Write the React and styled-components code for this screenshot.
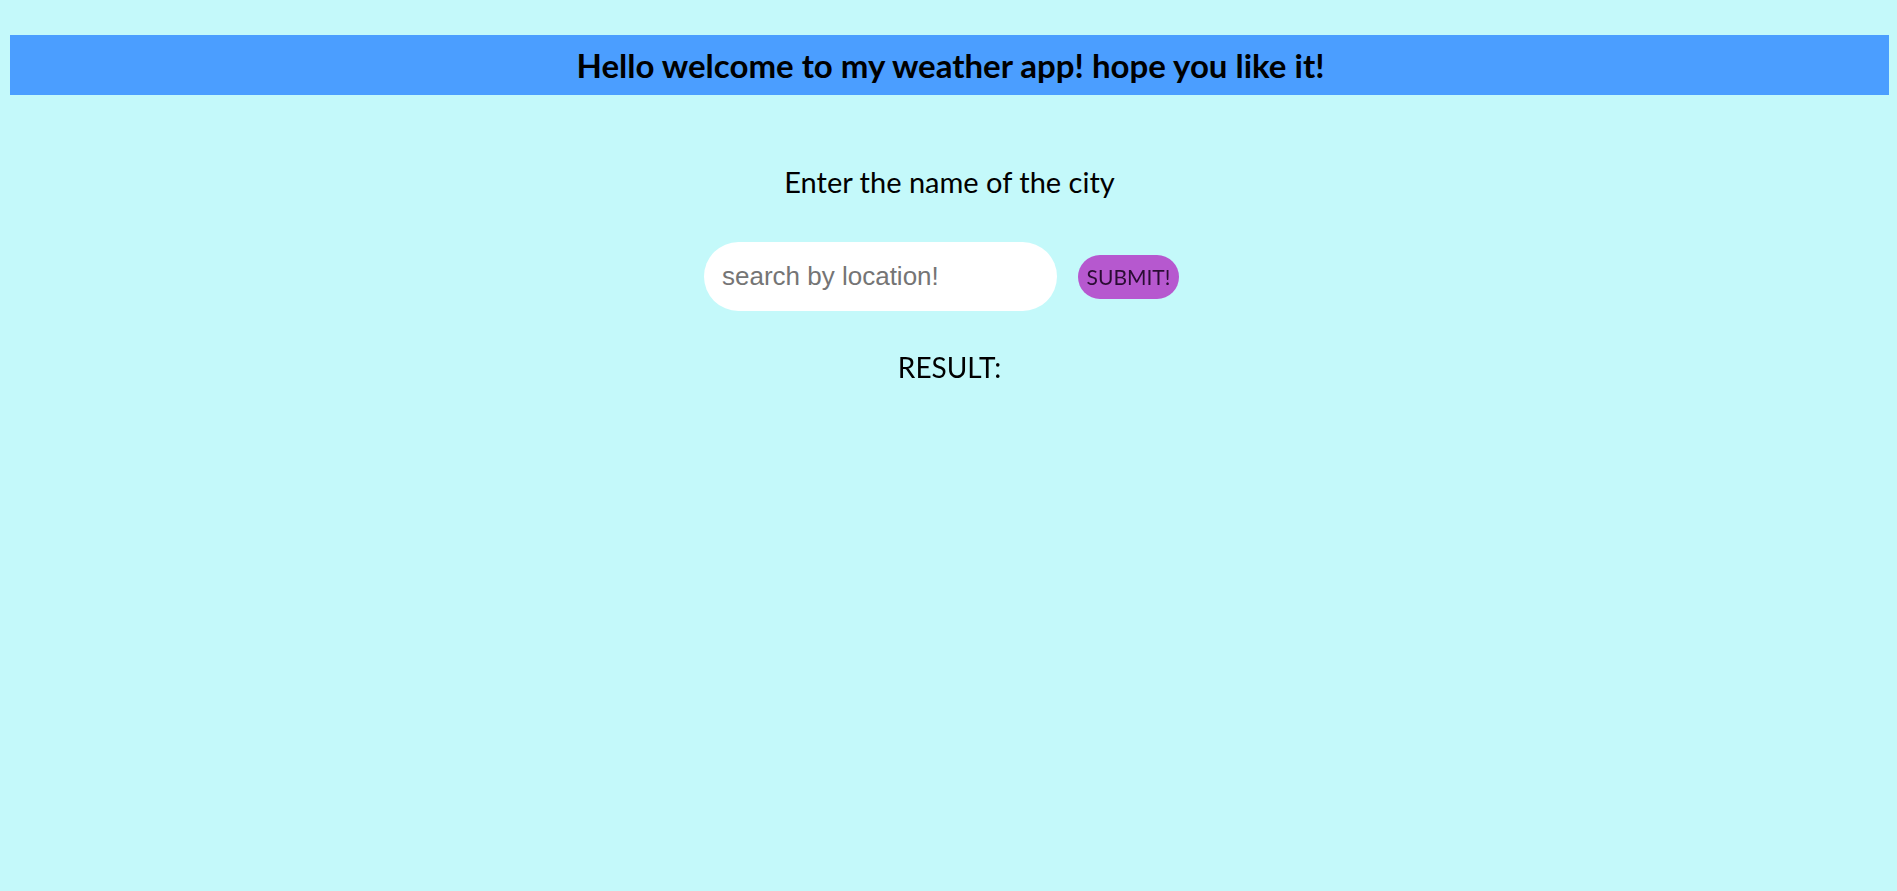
import React, { useState } from "react";
import styled, { createGlobalStyle } from "styled-components";

const GlobalStyle = createGlobalStyle`
  html, body {
    margin: 0;
    padding: 0;
    background-color: #c4f9fa;
  }
  body {
    font-family: Lato, "Noto Sans", sans-serif;
    color: #000;
  }
`;

const App = () => {
  const [city, setCity] = useState("");

  const submitHandler = (e) => {
    e.preventDefault();
  };

  return (
    <>
      <GlobalStyle />
      <Page>
        <Header>
          <Title>Hello welcome to my weather app! hope you like it!</Title>
        </Header>
        <Prompt>Enter the name of the city</Prompt>
        <SearchForm onSubmit={submitHandler}>
          <SearchInput
            type="text"
            placeholder="search by location!"
            value={city}
            onChange={(e) => setCity(e.target.value)}
            autoFocus
          />
          <SubmitButton type="submit">SUBMIT!</SubmitButton>
        </SearchForm>
        <Result>RESULT:</Result>
      </Page>
    </>
  );
};

export default App;

const Page = styled.div`
  min-height: 100vh;
  padding: 35px 8px 0 10px;
  box-sizing: border-box;
  display: flex;
  flex-direction: column;
  align-items: stretch;
`;

const Header = styled.header`
  height: 60px;
  background-color: #4b9eff;
  display: flex;
  align-items: center;
  justify-content: center;
`;

const Title = styled.h1`
  margin: 0;
  font-family: Lato, "Noto Sans", sans-serif;
  font-size: 33px;
  font-weight: 700;
  padding-left: 2px;
`;

const Prompt = styled.p`
  margin: 71px 0 0;
  text-align: center;
  font-size: 29px;
  line-height: 32px;
  font-weight: 400;
`;

const SearchForm = styled.form`
  margin-top: 44px;
  display: flex;
  align-items: center;
  justify-content: center;
  gap: 21px;
  padding-right: 16px;
`;

const SearchInput = styled.input`
  width: 353px;
  height: 69px;
  box-sizing: border-box;
  border: none;
  outline: none;
  border-radius: 35px;
  background: #fff;
  padding: 0 18px;
  font-family: "Liberation Sans", Arial, sans-serif;
  font-size: 26px;
  color: #333;
  caret-color: #000;

  &::placeholder {
    color: #757575;
  }
`;

const SubmitButton = styled.button`
  width: 101px;
  height: 44px;
  border: none;
  border-radius: 22px;
  background-color: #b658cf;
  color: #2a0c33;
  font-family: Lato, "Noto Sans", sans-serif;
  font-size: 21px;
  padding: 0;
  cursor: pointer;
`;

const Result = styled.h3`
  margin: 40px 0 0;
  text-align: center;
  font-size: 28px;
  line-height: 32px;
  font-weight: 400;
`;
